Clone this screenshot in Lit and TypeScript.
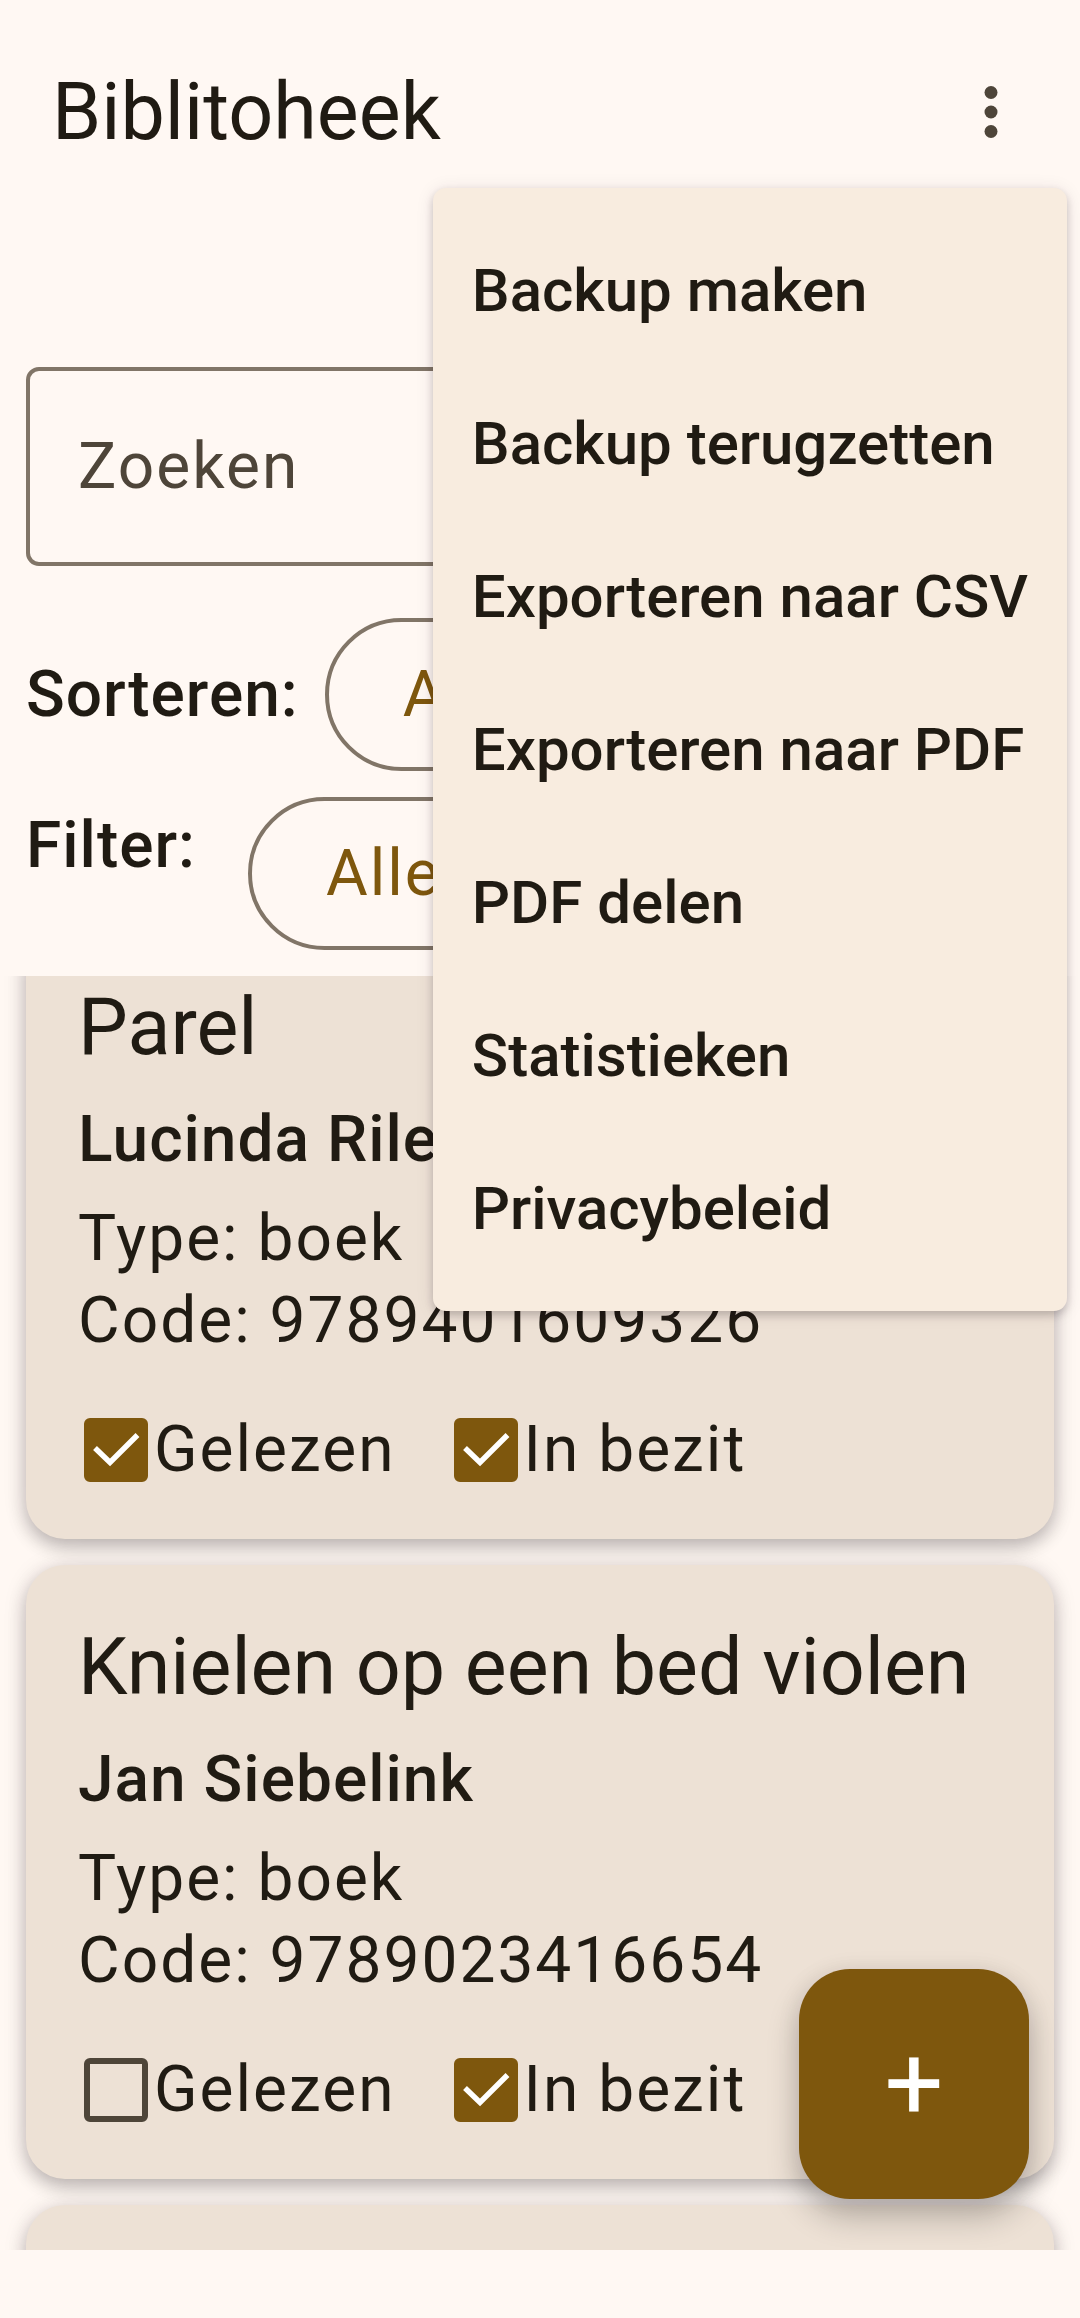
import { LitElement, css, html, nothing } from "lit";
import { customElement, query, state } from "lit/decorators.js";

interface Book {
  title: string;
  author: string;
  type: string;
  code: string;
  read: boolean;
  owned: boolean;
}

const MENU_ITEMS = [
  "Backup maken",
  "Backup terugzetten",
  "Exporteren naar CSV",
  "Exporteren naar PDF",
  "PDF delen",
  "Statistieken",
  "Privacybeleid",
];

@customElement("app-root")
export class AppRoot extends LitElement {
  @state() private menuOpen = true;

  @state() private books: Book[] = [
    { title: "Parel", author: "Lucinda Riley", type: "boek", code: "9789401609326", read: true, owned: true },
    { title: "Knielen op een bed violen", author: "Jan Siebelink", type: "boek", code: "9789023416654", read: false, owned: true },
  ];

  @query(".list") private list!: HTMLElement;

  static styles = css`
    :host {
      --surface: #fff8f3;
      --surface-menu: #f8ecdf;
      --surface-card: #ede1d5;
      --primary: #7e570d;
      --on-surface: #201b13;
      --on-surface-variant: #4e4539;
      --outline: #817567;
      display: block;
      font-family: Roboto, "Noto Sans", sans-serif;
      font-size: 64px;
      line-height: 82px;
      color: var(--on-surface);
    }
    *,
    *::before,
    *::after {
      box-sizing: border-box;
    }
    button,
    input {
      font: inherit;
      color: inherit;
      margin: 0;
    }
    button {
      cursor: pointer;
    }
    h1,
    h2,
    p {
      margin: 0;
      font-weight: 400;
    }
    .screen {
      position: relative;
      display: flex;
      flex-direction: column;
      height: 100vh;
      padding-bottom: 68px;
      background: var(--surface);
    }
    .app-bar {
      display: flex;
      align-items: center;
      justify-content: space-between;
      padding: 36px 13px 0 52px;
    }
    .heading {
      font-size: 79px;
      line-height: 100px;
    }
    .overflow {
      position: relative;
      z-index: 3;
    }
    .icon-button {
      display: grid;
      place-items: center;
      width: 152px;
      height: 152px;
      padding: 0;
      border: 0;
      border-radius: 50%;
      background: none;
      color: var(--on-surface-variant);
    }
    .menu {
      position: absolute;
      top: 100%;
      right: 0;
      display: flex;
      flex-direction: column;
      padding: 26px 0;
      border-radius: 13px;
      background: var(--surface-menu);
      box-shadow: 0 4px 8px rgba(0, 0, 0, 0.18), 0 2px 18px rgba(60, 20, 60, 0.1);
    }
    .menu-item {
      height: 153px;
      padding: 0 39px;
      border: 0;
      background: none;
      font-size: 60px;
      font-weight: 500;
      text-align: left;
      white-space: nowrap;
    }
    .controls {
      display: flex;
      flex-direction: column;
      gap: 26px;
      padding: 179px 26px 26px;
    }
    .search {
      width: 100%;
      height: 199px;
      margin-bottom: 26px;
      padding: 0 48px;
      border: 4px solid var(--outline);
      border-radius: 13px;
      background: none;
      letter-spacing: 2px;
    }
    .search::placeholder {
      color: var(--on-surface-variant);
      opacity: 1;
    }
    .choice {
      display: flex;
      align-items: center;
      gap: 26px;
    }
    .choice.top {
      align-items: flex-start;
      gap: 52px;
    }
    .choice.top .choice-label {
      padding-top: 8px;
    }
    .choice-label {
      font-weight: 500;
      letter-spacing: 1px;
    }
    .pill {
      height: 153px;
      min-width: 360px;
      padding: 0 74px;
      border: 4px solid var(--outline);
      border-radius: 77px;
      background: none;
      color: var(--primary);
      letter-spacing: 2px;
      text-align: left;
    }
    .list {
      flex: 1;
      min-height: 0;
      display: flex;
      flex-direction: column;
      gap: 26px;
      padding: 0 26px 26px;
      overflow-y: auto;
      scrollbar-width: none;
    }
    .card {
      flex: none;
      padding: 52px 52px 48px;
      border-radius: 39px;
      background: var(--surface-card);
      box-shadow: 0 8px 18px rgba(0, 0, 0, 0.22), 0 2px 24px rgba(40, 20, 40, 0.12);
    }
    .author {
      margin: 22px 0 17px;
      font-weight: 500;
      letter-spacing: 1px;
    }
    .detail {
      letter-spacing: 2px;
    }
    .flags {
      display: flex;
      gap: 52px;
      margin-top: 47px;
    }
    .flag {
      display: flex;
      align-items: center;
      gap: 6px;
      padding-left: 6px;
      letter-spacing: 2px;
    }
    .check {
      display: grid;
    }
    .check-input,
    .tick {
      grid-area: 1 / 1;
      width: 64px;
      height: 64px;
    }
    .check-input {
      appearance: none;
      border: 6px solid var(--on-surface-variant);
      border-radius: 6px;
    }
    .check-input:checked {
      border-color: var(--primary);
      background: var(--primary);
    }
    .tick {
      pointer-events: none;
    }
    .fab-layer {
      position: absolute;
      z-index: 2;
      inset: 0 0 68px;
      display: flex;
      align-items: flex-end;
      justify-content: flex-end;
      padding: 51px;
      overflow: hidden;
      pointer-events: none;
    }
    .fab {
      display: grid;
      place-items: center;
      width: 230px;
      height: 230px;
      padding: 0;
      border: 0;
      border-radius: 51px;
      background: var(--primary);
      color: #fff;
      font-size: 104px;
      line-height: 112px;
      pointer-events: auto;
      box-shadow: 0 18px 32px rgba(0, 0, 0, 0.24), 0 2px 24px rgba(40, 20, 40, 0.08);
    }
  `;

  protected firstUpdated() {
    // Reopen the list a little way into the first card.
    this.list.scrollTop = 51;
  }

  private setFlag(index: number, key: "read" | "owned", value: boolean) {
    this.books = this.books.map((book, i) => (i === index ? { ...book, [key]: value } : book));
  }

  private renderFlag(index: number, key: "read" | "owned", text: string) {
    const checked = this.books[index][key];
    return html`
      <label class="flag">
        <span class="check">
          <input
            class="check-input"
            type="checkbox"
            .checked=${checked}
            @change=${(e: Event) => this.setFlag(index, key, (e.target as HTMLInputElement).checked)}
          />
          ${checked
            ? html`<svg class="tick" viewBox="0 0 64 64" aria-hidden="true">
                <path d="M11 30 L26 44.5 L53.5 17" fill="none" stroke="#fff" stroke-width="5.5" />
              </svg>`
            : nothing}
        </span>
        <span>${text}</span>
      </label>
    `;
  }

  private renderBook(book: Book, index: number) {
    return html`
      <article class="card">
        <h2 class="heading">${book.title}</h2>
        <p class="author">${book.author}</p>
        <p class="detail">Type: ${book.type}</p>
        <p class="detail">Code: ${book.code}</p>
        <div class="flags">
          ${this.renderFlag(index, "read", "Gelezen")} ${this.renderFlag(index, "owned", "In bezit")}
        </div>
      </article>
    `;
  }

  render() {
    return html`
      <main class="screen">
        <header class="app-bar">
          <h1 class="heading">Biblitoheek</h1>
          <div class="overflow">
            <button
              class="icon-button"
              aria-label="Meer opties"
              aria-haspopup="menu"
              aria-expanded=${this.menuOpen ? "true" : "false"}
              @click=${() => (this.menuOpen = !this.menuOpen)}
            >
              <svg width="78" height="78" viewBox="0 0 78 78" fill="currentColor" aria-hidden="true">
                <circle cx="39" cy="19.5" r="6.5" />
                <circle cx="39" cy="39" r="6.5" />
                <circle cx="39" cy="58.5" r="6.5" />
              </svg>
            </button>
            ${this.menuOpen
              ? html`<div class="menu" role="menu">
                  ${MENU_ITEMS.map(
                    (item) => html`<button class="menu-item" role="menuitem" @click=${() => (this.menuOpen = false)}>${item}</button>`,
                  )}
                </div>`
              : nothing}
          </div>
        </header>

        <section class="controls">
          <input class="search" type="search" placeholder="Zoeken" aria-label="Zoeken" />
          <div class="choice">
            <span class="choice-label" id="sort-label">Sorteren:</span>
            <button class="pill" aria-describedby="sort-label">Auteur</button>
          </div>
          <div class="choice top">
            <span class="choice-label" id="filter-label">Filter:</span>
            <button class="pill" aria-describedby="filter-label">Alle</button>
          </div>
        </section>

        <section class="list">
          ${this.books.map((book, i) => this.renderBook(book, i))}
          <article class="card"></article>
        </section>

        <div class="fab-layer">
          <button class="fab" aria-label="Boek toevoegen">+</button>
        </div>
      </main>
    `;
  }
}
